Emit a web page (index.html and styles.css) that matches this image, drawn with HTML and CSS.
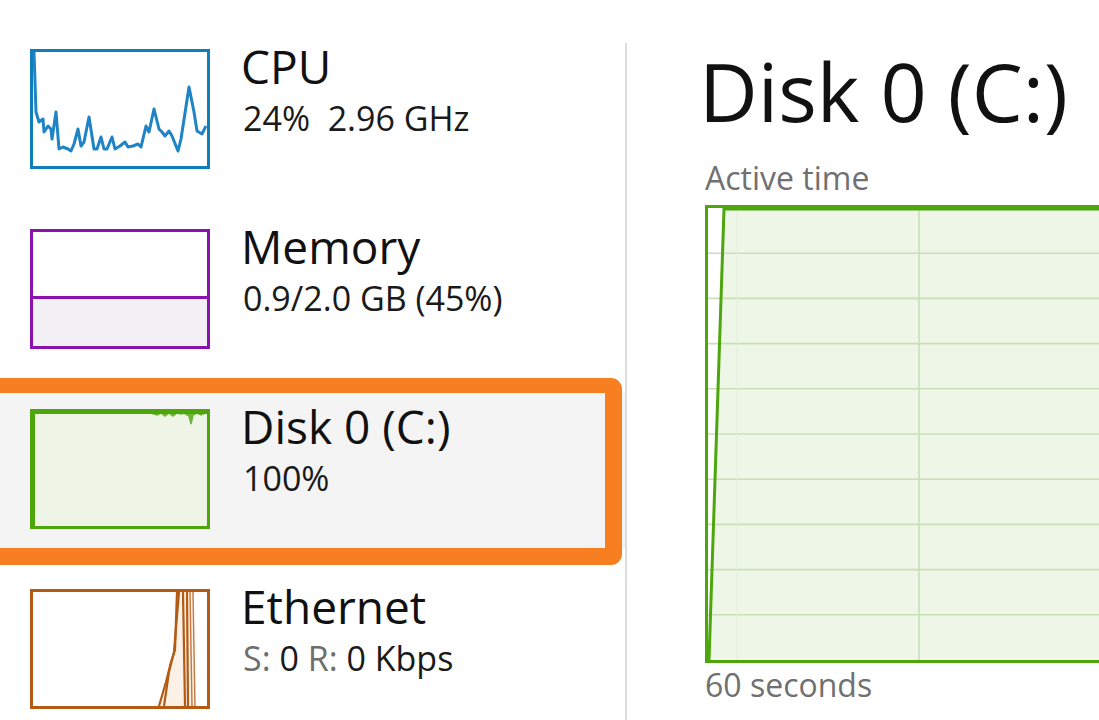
FILE: index.html
```html
<!DOCTYPE html>
<html lang="en">
<head>
<meta charset="utf-8">
<title>Task Manager - Performance</title>
<link rel="stylesheet" href="styles.css">
</head>
<body>
<div class="app">
  <div class="sidebar">
    <div class="row">
      <div class="thumb thumb-cpu">
        <svg viewBox="0 0 174 114" preserveAspectRatio="none">
          <polyline class="ln-cpu" points="1,0 3,60 6,70 10,67 11,80 15,74 18,77 19,87 23,60 26,97 30,95 35,97 38,99 41,92 45,77 48,94 51,90 56,65 61,97 64,97 68,85 71,97 74,97 79,85 82,97 87,94 92,90 95,95 100,94 105,92 108,95 113,74 116,80 121,57 126,77 129,80 132,84 136,79 139,84 145,99 148,87 156,35 161,60 164,79 169,82 173,74"/>
        </svg>
      </div>
      <div class="info">
        <div class="title">CPU</div>
        <div class="sub">24%&nbsp; 2.96 GHz</div>
      </div>
    </div>
    <div class="row">
      <div class="thumb thumb-mem">
        <div class="mem-free"></div>
        <div class="mem-used"></div>
      </div>
      <div class="info">
        <div class="title">Memory</div>
        <div class="sub">0.9/2.0 GB (45%)</div>
      </div>
    </div>
    <div class="row selected">
      <div class="thumb thumb-disk">
        <svg viewBox="0 0 174 114" preserveAspectRatio="none">
          <polygon class="fill-disk" points="0,0 174,0 174,114 0,114"/>
          <polyline class="ln-disk-top" points="118,1 124,3 128,1 132,4 136,1 140,4 144,1 148,2 151,1 156,4 158,12 160,3 164,1 168,3 172,1"/>
          <polyline class="ln-disk" points="1,114 1,1 174,1"/>
        </svg>
      </div>
      <div class="info">
        <div class="title">Disk 0 (C:)</div>
        <div class="sub">100%</div>
      </div>
      <div class="highlight"></div>
    </div>
    <div class="row">
      <div class="thumb thumb-eth">
        <svg viewBox="0 0 174 114" preserveAspectRatio="none">
          <polygon class="fill-eth" points="126,114 132,95 137,75 140,60 143,0 160,0 162,114"/>
          <polyline class="ln-eth" points="126,114 133,90 138,70 142,58 144,0"/>
          <polyline class="ln-eth" points="131,114 136,80 141,60 146,0"/>
          <polyline class="ln-eth" points="150,0 152,114"/>
          <polyline class="ln-eth" points="154,0 155,114"/>
          <polyline class="ln-eth thin" points="157,0 159,114"/>
          <polyline class="ln-eth thin" points="160,0 162,114"/>
        </svg>
      </div>
      <div class="info">
        <div class="title">Ethernet</div>
        <div class="sub"><span class="lbl">S:</span> 0 <span class="lbl">R:</span> 0 Kbps</div>
      </div>
    </div>
  </div>
  <div class="divider"></div>
  <div class="detail">
    <div class="detail-title">Disk 0 (C:)</div>
    <div class="caption caption-top">Active time</div>
    <div class="graph">
      <svg viewBox="0 0 434 452" preserveAspectRatio="none">
        <polygon class="g-fill" points="2,452 17,0 434,0 434,452"/>
        <g class="grid">
          <line x1="0" y1="45.2" x2="434" y2="45.2"/>
          <line x1="0" y1="90.4" x2="434" y2="90.4"/>
          <line x1="0" y1="135.6" x2="434" y2="135.6"/>
          <line x1="0" y1="180.8" x2="434" y2="180.8"/>
          <line x1="0" y1="226" x2="434" y2="226"/>
          <line x1="0" y1="271.2" x2="434" y2="271.2"/>
          <line x1="0" y1="316.4" x2="434" y2="316.4"/>
          <line x1="0" y1="361.6" x2="434" y2="361.6"/>
          <line x1="0" y1="406.8" x2="434" y2="406.8"/>
          <line x1="211" y1="0" x2="211" y2="452"/>
          <line class="faint" x1="29" y1="0" x2="29" y2="452"/>
        </g>
        <polyline class="g-line" points="1,452 16,1 434,1"/>
      </svg>
    </div>
    <div class="caption caption-bottom">60 seconds</div>
  </div>
</div>
</body>
</html>
```
FILE: styles.css
```css
html, body {
  margin: 0;
  padding: 0;
  background: #ffffff;
  overflow: hidden;
}

body {
  width: 1099px;
  height: 720px;
  font-family: "Open Sans", "Noto Sans", "DejaVu Sans", sans-serif;
  color: #1a1a1a;
}

.app {
  display: flex;
  align-items: flex-start;
  height: 720px;
}

.sidebar {
  flex: none;
  width: 625px;
  padding-top: 33px;
  display: flex;
  flex-direction: column;
  gap: 25px;
}

.row {
  position: relative;
  display: flex;
  align-items: flex-start;
  gap: 30px;
  height: 155px;
  padding-left: 30px;
}

.row.selected {
  background: #f4f4f4;
}

.highlight {
  position: absolute;
  top: -15px;
  left: -30px;
  right: 3px;
  bottom: -17px;
  border-style: solid;
  border-color: #f77f22;
  border-width: 15px 17px 17px 15px;
  border-radius: 11px;
  pointer-events: none;
}

.thumb {
  flex: none;
  box-sizing: border-box;
  width: 180px;
  height: 120px;
  margin-top: 16px;
  border: 3px solid;
  background: #ffffff;
  position: relative;
}

.thumb svg {
  display: block;
  width: 174px;
  height: 114px;
}

.thumb-cpu {
  border-color: #117dbb;
}

.ln-cpu {
  fill: none;
  stroke: #1f84c6;
  stroke-width: 3;
  stroke-linejoin: round;
}

.thumb-mem {
  border-color: #8b12ae;
  display: flex;
  flex-direction: column;
}

.mem-free {
  height: 64px;
  background: #ffffff;
  border-bottom: 3px solid #8b12ae;
}

.mem-used {
  flex: 1;
  background: #f2f0f4;
}

.thumb-disk {
  border-color: #4da60c;
}

.fill-disk {
  fill: #eef5e6;
}

.ln-disk {
  fill: none;
  stroke: #4da60c;
  stroke-width: 2;
}

.ln-disk-top {
  fill: #4da60c;
  stroke: #4da60c;
  stroke-width: 1.5;
  opacity: 0.8;
}

.thumb-eth {
  border-color: #b35a14;
}

.fill-eth {
  fill: #fcf1e7;
}

.ln-eth {
  fill: none;
  stroke: #b35a14;
  stroke-width: 2.2;
}

.ln-eth.thin {
  stroke-width: 1.4;
  opacity: 0.8;
}

.info {
  padding-top: 10px;
  padding-left: 3px;
}

.title {
  font-size: 46px;
  line-height: 46px;
  color: #111111;
  margin-left: -2px;
  white-space: nowrap;
}

.sub {
  font-size: 34px;
  line-height: 34px;
  margin-top: 12px;
  color: #1a1a1a;
  white-space: nowrap;
}

.lbl {
  color: #6e6e6e;
}

.divider {
  flex: none;
  width: 2px;
  height: 677px;
  margin-top: 43px;
  background: #dcdcdc;
}

.detail {
  flex: 1;
  min-width: 0;
  padding-left: 78px;
  padding-top: 50px;
  overflow: hidden;
}

.detail-title {
  font-size: 81px;
  line-height: 81px;
  color: #111111;
  margin-left: -6px;
  white-space: nowrap;
}

.caption {
  font-size: 32px;
  line-height: 40px;
  color: #707070;
  white-space: nowrap;
}

.caption-top {
  margin-top: 27px;
}

.graph {
  box-sizing: border-box;
  width: 440px;
  height: 458px;
  margin-top: 7px;
  border: 3px solid #4da60c;
  background: #ffffff;
}

.graph svg {
  display: block;
  width: 434px;
  height: 452px;
}

.g-fill {
  fill: #eef6e7;
}

.grid line {
  stroke: #c9e0b6;
  stroke-width: 1.6;
}

.grid line.faint {
  stroke: #e2eedb;
  stroke-width: 1;
}

.g-line {
  fill: none;
  stroke: #4da60c;
  stroke-width: 3;
}

.caption-bottom {
  margin-top: 2px;
}
```
